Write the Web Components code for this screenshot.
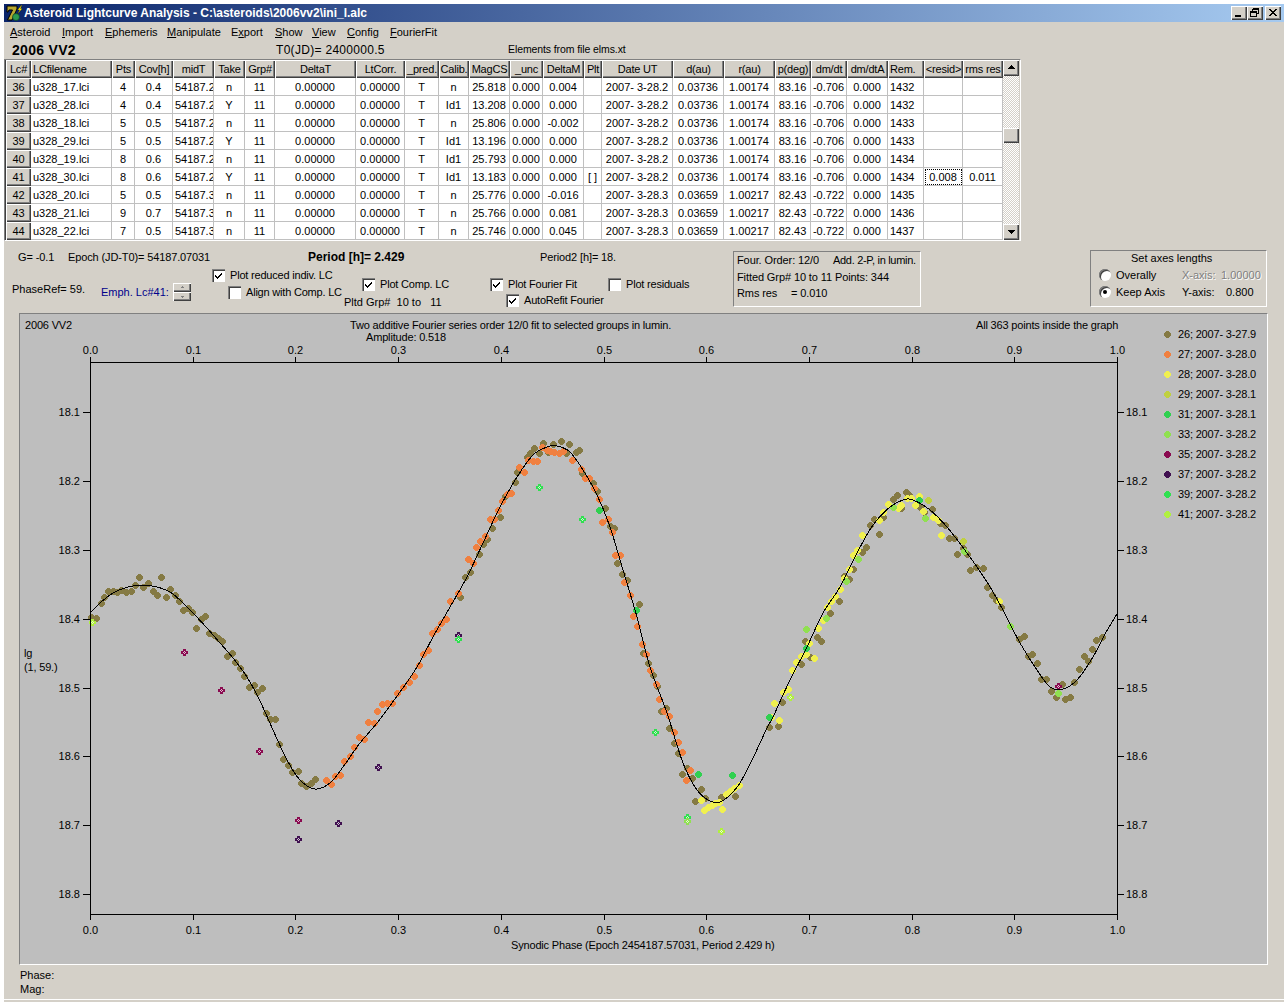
<![CDATA[<!DOCTYPE html>
<html><head><meta charset="utf-8"><title>Asteroid Lightcurve Analysis</title>
<style>
html,body{margin:0;padding:0;background:#fff;}
body{font:11px/14px "Liberation Sans",Arial,sans-serif;color:#000;overflow:hidden;}
</style>
<script>
const def=(name,css,html,onConnect)=>customElements.define(name,class extends HTMLElement{
  constructor(){super();this.attachShadow({mode:'open'}).innerHTML=`<style>${css}</style>${html}`;}
  connectedCallback(){if(onConnect)onConnect.call(this,this.shadowRoot);}
});
const raised='box-shadow:inset 1px 1px 0 #fff,inset -1px -1px 0 #404040,inset -2px -2px 0 #808080;';

def('app-window',`:host{display:flex;flex-direction:column;width:1280px;height:998px;margin:4px 4px 0;background:#d4d0c8;}`,`<slot></slot>`);

def('win-button',`:host{display:block;width:16px;height:14px;background:#d4d0c8;${raised}}svg{display:block}`,`<slot></slot>`);

def('title-bar',`:host{display:flex;align-items:center;height:18px;background:linear-gradient(90deg,#0a246a,#a6caf0);color:#fff;font:bold 12px/18px "Liberation Sans",Arial,sans-serif;padding-left:2px;box-sizing:border-box;}
.t{flex:1;margin-left:2px;white-space:nowrap}.b{display:flex;margin-right:3px}.x{margin-left:2px}svg.l{display:block}`,
`<svg class="l" width="16" height="16" viewBox="0 0 16 16"><path d="M1 1h10v3L6 15H1.5L6.5 5H3L2 7H1z" fill="#b8a830" stroke="#000"/><circle cx="10" cy="12" r="3.5" fill="#2a9a50" stroke="#104020" stroke-width=".7"/><path d="M15.5 0l-4 5h2l-2 4 5-5.5h-2L16 0z" fill="#ffe800" stroke="#000" stroke-width=".3"/></svg>
<span class="t"><slot></slot></span>
<span class="b"><win-button><svg width="16" height="14"><rect x="4" y="9" width="6" height="2" fill="#000"/></svg></win-button>
<win-button><svg width="16" height="14" shape-rendering="crispEdges"><path d="M5.5 2.5h6v5h-2M5.5 2.5v2M3.5 5.5h6v5h-6z" fill="none" stroke="#000"/><path d="M5 3h7M3 6h7" stroke="#000" fill="none"/></svg></win-button>
<win-button class="x"><svg width="16" height="14"><path d="M4 3l7 7M5 3l7 7M11 3l-7 7M12 3l-7 7" stroke="#000" fill="none" shape-rendering="crispEdges"/></svg></win-button></span>`);

def('menu-bar',`:host{display:grid;grid-template-columns:52px 43px 62px 64px 44px 37px 35px 43px auto;height:18px;align-items:center;padding-left:6px;box-sizing:border-box;padding-top:2px}`,
`<span><u>A</u>steroid</span><span><u>I</u>mport</span><span><u>E</u>phemeris</span><span><u>M</u>anipulate</span><span>E<u>x</u>port</span><span><u>S</u>how</span><span><u>V</u>iew</span><span><u>C</u>onfig</span><span><u>F</u>ourierFit</span>`);

def('info-row',`:host{display:grid;grid-template-columns:264px 232px auto;height:19px;align-items:center;padding-left:8px;box-sizing:border-box}
b{font-size:14px;letter-spacing:.3px}.m{font-size:12px;letter-spacing:.3px}`,`<b>2006 VV2</b><span class="m">T0(JD)= 2400000.5</span><span style="font-size:10.5px;padding-bottom:2px;letter-spacing:-.1px">Elements from file elms.xt</span>`);

const bounds=[6,31,112,135,173,214,245,275,356,405,439,469,510,543,584,602,673,724,775,811,847,888,924,963,1003];
const heads=['Lc#','LCfilename','Pts','Cov[h]','midT','Take','Grp#','DeltaT','LtCorr.','_pred.','Calib.','MagCS','_unc','DeltaM','Plt','Date UT','d(au)','r(au)','p(deg)','dm/dt','dm/dtA','Rem.','<resid>','rms res'];
const R=(a,f,p,c,t,tk,cal,mag,dm,plt,ep,rem,res,rms)=>{const o=ep?['2007- 3-28.3','0.03659','1.00217','82.43','-0.722']:['2007- 3-28.2','0.03736','1.00174','83.16','-0.706'];
 return [a,f,p,c,t,tk,'11','0.00000','0.00000','T',cal,mag,'0.000',dm,plt,...o,'0.000',rem,res,rms];};
const rows=[
R('36','u328_17.lci','4','0.4','54187.2','n','n','25.818','0.004','',0,'1432','',''),
R('37','u328_28.lci','4','0.4','54187.2','Y','Id1','13.208','0.000','',0,'1432','',''),
R('38','u328_18.lci','5','0.5','54187.2','n','n','25.806','-0.002','',0,'1433','',''),
R('39','u328_29.lci','5','0.5','54187.2','Y','Id1','13.196','0.000','',0,'1433','',''),
R('40','u328_19.lci','8','0.6','54187.2','n','Id1','25.793','0.000','',0,'1434','',''),
R('41','u328_30.lci','8','0.6','54187.2','Y','Id1','13.183','0.000','[ ]',0,'1434','0.008','0.011'),
R('42','u328_20.lci','5','0.5','54187.3','n','n','25.776','-0.016','',1,'1435','',''),
R('43','u328_21.lci','9','0.7','54187.3','n','n','25.766','0.081','',1,'1436','',''),
R('44','u328_22.lci','7','0.5','54187.3','n','n','25.746','0.045','',1,'1437','','')];
const esc=s=>s.replace(/&/g,'&amp;').replace(/</g,'&lt;');
const colsCss=bounds.slice(1).map((b,i)=>(b-bounds[i])+'px').join(' ');
let cells=heads.map((h,i)=>`<div class="h${i===1||i===21?' l':''}">${esc(h)}</div>`).join('');
rows.forEach(r=>r.forEach((v,i)=>{
  let cls='c';
  if(i===0)cls='h f';else if(i===1||i===4||i===21)cls='c l';
  if(v==='0.008')cls+=' foc';
  cells+=`<div class="${cls}">${esc(v)}</div>`;
}));
const tri=up=>`<svg width="16" height="16"><path d="${up?'M8 5l4 4H4z':'M8 10L4 6h8z'}" fill="#000" shape-rendering="crispEdges"/></svg>`;
def('lc-table',`:host{display:block;width:1017px;height:182px;box-sizing:border-box;border:1px solid;border-color:#808080 #fff #fff #808080;}
.w{display:flex;border-left:1px solid #404040;height:180px;background:#d4d0c8}
.g{display:grid;grid-template-columns:${colsCss};grid-auto-rows:18px;width:997px;background:#fff}
.g>div{box-sizing:border-box;line-height:17px;padding-top:1px;text-align:center;white-space:nowrap;overflow:hidden}
.h{background:#d4d0c8;letter-spacing:-.2px;${raised}}
.c{border-right:1px solid #c0c0c0;border-bottom:1px solid #c0c0c0;}
.l{text-align:left!important;padding-left:2px}
.foc{outline:1px dotted #000;outline-offset:-2px}
.s{width:16px;display:flex;flex-direction:column;background:repeating-conic-gradient(#fff 0 25%,#d4d0c8 0 50%) 0 0/2px 2px}
.b{height:16px;background:#d4d0c8;${raised}}
.b svg{display:block}.th{height:15px;margin-top:52px;background:#d4d0c8;${raised}}.sp{flex:1}`,
`<div class="w"><div class="g">${cells}</div><div class="s"><div class="b">${tri(1)}</div><div class="th"></div><div class="sp"></div><div class="b">${tri(0)}</div></div></div>`);

def('check-box',`:host{display:flex;align-items:center;gap:5px;height:14px;white-space:nowrap;letter-spacing:-.2px}
i{display:block;width:13px;height:13px;box-sizing:border-box;background:#fff;box-shadow:inset 1px 1px 0 #808080,inset 2px 2px 0 #404040,inset -1px -1px 0 #fff;flex:none}
svg{display:block}`,`<i></i><slot></slot>`,function(r){
  if(this.hasAttribute('data-on'))r.querySelector('i').innerHTML='<svg width="13" height="13"><path d="M3 6l2 2 5-5v2L5 10 3 8z" fill="#000" shape-rendering="crispEdges"/></svg>';
});

def('radio-btn',`:host{display:flex;align-items:center;gap:5px;height:14px;white-space:nowrap}
i{display:block;width:12px;height:12px;border-radius:50%;background:#fff;box-shadow:inset 1px 1px 0 #808080,inset 2px 2px 0 #404040;flex:none;overflow:hidden}
b{display:block;width:4px;height:4px;border-radius:50%;background:#000;margin:4px}`,`<i></i><slot></slot>`,function(r){
  if(this.hasAttribute('data-on'))r.querySelector('i').innerHTML='<b></b>';
});

def('spin-btn',`:host{display:block;width:18px;height:18px}div{height:9px;background:#d4d0c8;${raised}}svg{display:block}`,
`<div><svg width="18" height="9"><path d="M9 3l2 2H7z" fill="#808080" shape-rendering="crispEdges"/></svg></div><div><svg width="18" height="9"><path d="M9 6L7 4h4z" fill="#808080" shape-rendering="crispEdges"/></svg></div>`);

def('group-box',`:host{display:block;box-sizing:border-box;border:1px solid;border-color:#808080 #fff #fff #808080;}`,`<slot></slot>`);

def('ctl-panel',`:host{display:flex;height:72px;}
.left{width:729px;flex:none}
.r1{display:grid;grid-template-columns:50px 240px 232px auto;padding:9px 0 0 14px;height:14px;letter-spacing:-.12px}
.r1 b{font-size:12px;letter-spacing:0}
.r2{display:flex}
.col{display:flex;flex-direction:column}
.a{width:97px;padding:18px 0 0 8px;box-sizing:border-box}
.e{width:111px;display:flex;align-items:center;height:18px;margin-top:19px;gap:4px}
.e span{color:#00008b}
.c{width:132px;padding-top:4px;gap:3px}.d{width:146px;padding-top:13px;gap:4px}.f{width:118px;padding-top:13px;gap:2px}
.ind{margin-left:16px}.ind2{margin-left:16px}.dd{margin-left:18px}
.g1{width:188px;height:56px;margin-top:10px;padding:0 0 0 3px;line-height:16.5px;flex:none;white-space:nowrap;letter-spacing:-.1px}
.g1 div{display:flex}.g1 .x1{width:96px}.g1 .x2{width:54px}.g1 .x3{letter-spacing:-.3px}
.g2{width:177px;height:57px;margin:9px 0 0 169px;flex:none;padding:0 0 0 8px;box-sizing:border-box}
.tt{padding:0 0 0 32px;height:15px}
.gr{display:grid;grid-template-columns:83px 39px auto;grid-auto-rows:17px;align-items:center}
.dis{color:#808080;text-shadow:1px 1px 0 #fff}
.v{padding-left:5px}`,
`<div class="left">
<div class="r1"><span>G= -0.1</span><span>Epoch (JD-T0)= 54187.07031</span><b>Period [h]= 2.429</b><span>Period2 [h]= 18.</span></div>
<div class="r2">
<div class="a col"><span>PhaseRef= 59.</span></div>
<div class="e"><span>Emph. Lc#41:</span><spin-btn></spin-btn></div>
<div class="col c"><check-box data-on>Plot reduced indiv. LC</check-box><check-box class="ind">Align with Comp. LC</check-box></div>
<div class="col d"><check-box class="dd" data-on>Plot Comp. LC</check-box><span>Pltd Grp#&nbsp; 10 to&nbsp;&nbsp; 11</span></div>
<div class="col f"><check-box data-on>Plot Fourier Fit</check-box><check-box class="ind2" data-on>AutoRefit Fourier</check-box></div>
<div class="col f"><check-box>Plot residuals</check-box></div>
</div></div>
<group-box class="g1"><div><span class="x1">Four. Order: 12/0</span><span class="x3">Add. 2-P, in lumin.</span></div><div>Fitted Grp# 10 to 11 Points: 344</div><div><span class="x2">Rms res</span><span>= 0.010</span></div></group-box>
<group-box class="g2"><div class="tt">Set axes lengths</div><div class="gr"><radio-btn>Overally</radio-btn><span class="dis">X-axis:</span><span class="dis">1.00000</span><radio-btn data-on>Keep Axis</radio-btn><span>Y-axis:</span><span class="v">0.800</span></div></group-box>`);

// --- chart data, read from the reference ---
const Z7=(x,y)=>[60+x/3,550+y/3],Z8=(x,y)=>[400+x/3,420+y/3],Z9=(x,y)=>[740+x/3,470+y/3];
const conv=(f,a)=>a.map(p=>f(p[0],p[1]));
const C={olive:'#857a44',orange:'#f08040',yellow:'#f0f050',g29:'#c0d040',g31:'#30d050',g33:'#90e050',g35:'#8a0a50',g37:'#401050',g39:'#30e050',g41:'#b0f040'};
const olive=[...conv(Z7,[[92,200],[107,205],[122,160],[133,142],[145,122],[158,123],[172,127],[184,119],[198,127],[212,122],[226,106],[238,82],[250,110],[265,100],[278,122],[292,135],[304,82],[319,142],[331,118],[345,136],[358,152],[370,180],[384,173],[397,187],[409,235],[422,207],[436,199],[448,250],[462,256],[475,264],[487,274],[502,319],[515,310],[526,335],[541,355],[553,377],[568,412],[581,405],[592,426],[607,415],[619,490],[630,507],[646,508],[658,583],[670,628],[684,646],[697,667],[713,664],[724,700],[737,707],[752,698],[764,688]]),
...conv(Z8,[[181,532],[196,472],[209,455],[236,403],[248,372],[260,358],[275,325],[301,292],[316,228],[344,187],[352,155],[380,112],[390,100],[403,85],[418,100],[430,68],[445,96],[458,72],[484,62],[497,100],[508,72],[528,97],[536,91],[547,160],[578,190],[590,214],[614,265],[631,318],[641,324],[652,430],[667,463],[682,481],[718,553],[729,700],[745,728],[758,764],[770,799],[784,874],[797,865],[808,925],[823,970],[833,1000],[847,1063],[862,1045],[877,1073],[902,1108],[885,1144],[915,1135],[963,1132],[1004,1127]]),
...conv(Z9,[[88,772],[115,767],[127,697],[184,583],[195,513],[210,561],[230,502],[244,514],[271,430],[298,394],[286,377],[313,318],[328,328],[340,297],[365,247],[379,232],[391,166],[403,148],[418,193],[430,140],[458,88],[470,76],[484,115],[497,67],[508,74],[539,111],[552,127],[575,118],[600,160],[614,166],[628,205],[641,205],[652,253],[668,235],[680,253],[691,301],[707,291],[730,295],[742,352],[757,376],[769,391],[782,412],[838,507],[853,499],[865,559],[877,553],[892,580],[904,628],[919,627],[932,664],[949,680],[965,642],[976,688],[991,682],[1003,637],[1018,596],[1032,559],[1043,572],[1057,538],[1069,511],[1085,502]])];
const orange=[...conv(Z7,[[798,691],[814,703],[826,677],[841,676],[853,633],[869,617],[883,592],[897,562],[913,568],[925,515],[941,520],[952,484],[966,461],[980,460],[996,458],[1012,428]]),
...conv(Z8,[[8,802],[26,785],[43,769],[56,734],[70,703],[84,691],[97,640],[112,628],[124,608],[137,596],[150,544],[175,520],[203,418],[220,430],[229,381],[240,364],[256,347],[270,297],[282,296],[295,271],[307,244],[320,223],[334,219],[358,140],[373,157],[385,120],[398,122],[412,124],[425,80],[440,90],[450,92],[462,95],[478,100],[490,92],[517,121],[544,146],[556,174],[568,175],[583,205],[596,237],[607,307],[623,297],[635,336],[646,404],[661,406],[671,487],[689,526],[700,587],[712,619],[727,673],[739,701],[750,751],[767,792],[778,838],[793,872],[806,888],[821,937],[833,967],[845,997],[871,1051],[859,1080]])];
const yellow=[...conv(Z8,[[902,1141],[913,1171],[925,1160],[935,1155],[945,1148],[957,1147],[967,1168],[978,1122],[990,1112],[1003,1104],[1018,1095]]),
...conv(Z9,[[92,740],[118,751],[103,700],[130,667],[145,656],[157,601],[169,577],[184,559],[198,553],[208,520],[223,565],[235,475],[248,450],[262,412],[273,393],[286,377],[301,358],[312,325],[328,296],[340,254],[350,241],[367,196],[418,151],[430,127],[445,103],[474,115],[484,106],[501,85],[512,83],[524,106],[538,79],[550,124],[580,141],[595,150],[604,196],[778,394]])];
const g29=conv(Z9,[[565,89],[670,214]]);
const g31=[...conv(Z8,[[598,271],[707,571],[893,1063],[997,1066]]),...conv(Z9,[[88,742],[198,535],[536,90]])];
const g33=conv(Z9,[[199,478],[257,445],[318,334],[355,266],[460,112],[556,145],[672,243],[811,469],[955,668]]);
const small=[[C.g41,Z7(97,216)],[C.g35,Z7(373,307)],[C.g35,Z7(484,421)],[C.g35,Z7(598,604)],[C.g35,Z7(714,811)],[C.g37,Z7(955,650)],[C.g37,Z7(835,820)],[C.g37,Z7(714,868)],
[C.g37,Z8(175,645)],[C.g39,Z8(175,658)],[C.g39,Z8(418,202)],[C.g39,Z8(547,298)],[C.g39,Z8(766,937)],[C.g39,Z8(862,1192)],[C.g33,Z8(862,1202)],[C.g41,Z8(964,1234)],[C.g41,Z9(151,682)],[C.g35,Z9(955,649)]];
const curve=[[90,613],[100,603],[113,593],[128,587],[143,585],[157,587],[170,592],[182,602],[193,613],[207,628],[220,643],[233,658],[247,677],[260,701],[273,730],[287,760],[300,780],[315,789],[330,783],[343,767],[360,743],[377,723],[400,692],[417,667],[433,637],[450,607],[467,577],[483,543],[500,507],[517,477],[533,455],[547,447],[557,446],[570,452],[583,470],[597,495],[610,527],[623,570],[637,617],[650,667],[667,713],[683,763],[697,790],[710,801],[720,802],[730,795],[740,783],[753,758],[767,728],[773,717],[790,680],[807,647],[823,613],[840,587],[857,553],[873,525],[890,507],[903,500],[913,500],[930,510],[947,527],[967,553],[987,582],[1003,610],[1020,643],[1037,670],[1050,687],[1063,689],[1077,680],[1093,657],[1105,634],[1117,614]];
function spline(p){let d=`M${p[0][0]} ${p[0][1]}`;for(let i=0;i<p.length-1;i++){const a=p[Math.max(i-1,0)],b=p[i],c=p[i+1],e=p[Math.min(i+2,p.length-1)];
 d+=`C${(b[0]+(c[0]-a[0])/6).toFixed(1)} ${(b[1]+(c[1]-a[1])/6).toFixed(1)} ${(c[0]-(e[0]-b[0])/6).toFixed(1)} ${(c[1]-(e[1]-b[1])/6).toFixed(1)} ${c[0]} ${c[1]}`;}return d;}
const dotPath=(x,y)=>`M${x-1} ${y-3}h3v1h1v1h1v3h-1v1h-1v1h-3v-1h-1v-1h-1v-3h1v-1h1z`;
const dots=(a,col)=>`<path fill="${col}" d="${a.map(p=>dotPath(Math.round(p[0]),Math.round(p[1]))).join('')}"/>`;
const mark=(col,p)=>{const x=Math.round(p[0]),y=Math.round(p[1]);return `<path d="M${x-1} ${y-3}h3v2h2v3h-2v2h-3v-2h-2v-3h2z" fill="${col}"/><path d="M${x} ${y-1}h1v1h-1zM${x-1} ${y}h1v1h-1zM${x+1} ${y}h1v1h-1zM${x} ${y+1}h1v1h-1z" fill="#fff" opacity=".75"/>`;};
const T=(x,y,s,a,c)=>`<text x="${x}" y="${y}"${a?` text-anchor="${a}"`:''}${c?` class="${c}"`:''}>${s}</text>`;
let axLines='',axText='';
for(let i=0;i<=10;i++){const x=Math.round(90+102.7*i),l=(i/10).toFixed(1);
  axLines+=`<path d="M${x+.5} 357v5M${x+.5} 914v6"/>`;axText+=T(x+.5,354,l,'middle','n')+T(x+.5,934,l,'middle','n');}
[[412,'18.1'],[481,'18.2'],[550,'18.3'],[619,'18.4'],[688,'18.5'],[756,'18.6'],[825,'18.7'],[894,'18.8']].forEach(([y,l])=>{
  axLines+=`<path d="M83 ${y+.5}h7M1117 ${y+.5}h7"/>`;axText+=T(80,y+4,l,'end','n')+T(1126,y+4,l,'','n');});
const leg=[['26; 2007- 3-27.9',C.olive],['27; 2007- 3-28.0',C.orange],['28; 2007- 3-28.0',C.yellow],['29; 2007- 3-28.1',C.g29],['31; 2007- 3-28.1',C.g31],['33; 2007- 3-28.2',C.g33],['35; 2007- 3-28.2',C.g35],['37; 2007- 3-28.2',C.g37],['39; 2007- 3-28.2',C.g39],['41; 2007- 3-28.2',C.g41]];
const lgDots=leg.map((l,i)=>`<path d="${dotPath(1167,334+i*20)}" fill="${l[1]}"/>`).join('');
const lgText=leg.map((l,i)=>T(1178,338+i*20,l[0])).join('');
def('light-curve',`:host{display:block;width:1249px;height:652px;margin-left:15px;box-sizing:border-box;border:1px solid;border-color:#808080 #fff #fff #808080;background:#bebebe;}
svg{display:block;font:11px "Liberation Sans",Arial,sans-serif}text{fill:#000;letter-spacing:-.17px}text.n{letter-spacing:0}`,
`<svg width="1247" height="650" viewBox="20 314 1247 650">
<g shape-rendering="crispEdges">${dots(olive,C.olive)}${dots(orange,C.orange)}${dots(yellow,C.yellow)}${dots(g29,C.g29)}${dots(g31,C.g31)}${dots(g33,C.g33)}${small.map(s=>mark(s[0],s[1])).join('')}
<path d="${spline(curve)}" fill="none" stroke="#000"/>
<rect x="90.5" y="362.5" width="1027" height="552" fill="none" stroke="#000"/>
<g stroke="#000" fill="none">${axLines}</g>${lgDots}</g>
${axText}${lgText}
${T(25,329,'2006 VV2')}${T(350,329,'Two additive Fourier series order 12/0 fit to selected groups in lumin.')}${T(366,341,'Amplitude: 0.518')}${T(976,329,'All 363 points inside the graph')}
${T(24,657,'lg')}${T(24,671,'(1, 59.)')}${T(511,949,'Synodic Phase (Epoch 2454187.57031, Period 2.429 h)')}
</svg>`);

def('status-lines',`:host{display:block;height:35px;padding:3px 0 0 16px;box-sizing:border-box;border-bottom:1px solid #fff;line-height:14px}`,`<div>Phase:</div><div>Mag:</div>`);
</script></head>
<body><app-window><title-bar>Asteroid Lightcurve Analysis - C:\asteroids\2006vv2\ini_l.alc</title-bar><menu-bar></menu-bar><info-row></info-row><lc-table></lc-table><ctl-panel></ctl-panel><light-curve></light-curve><status-lines></status-lines></app-window></body></html>]]>
